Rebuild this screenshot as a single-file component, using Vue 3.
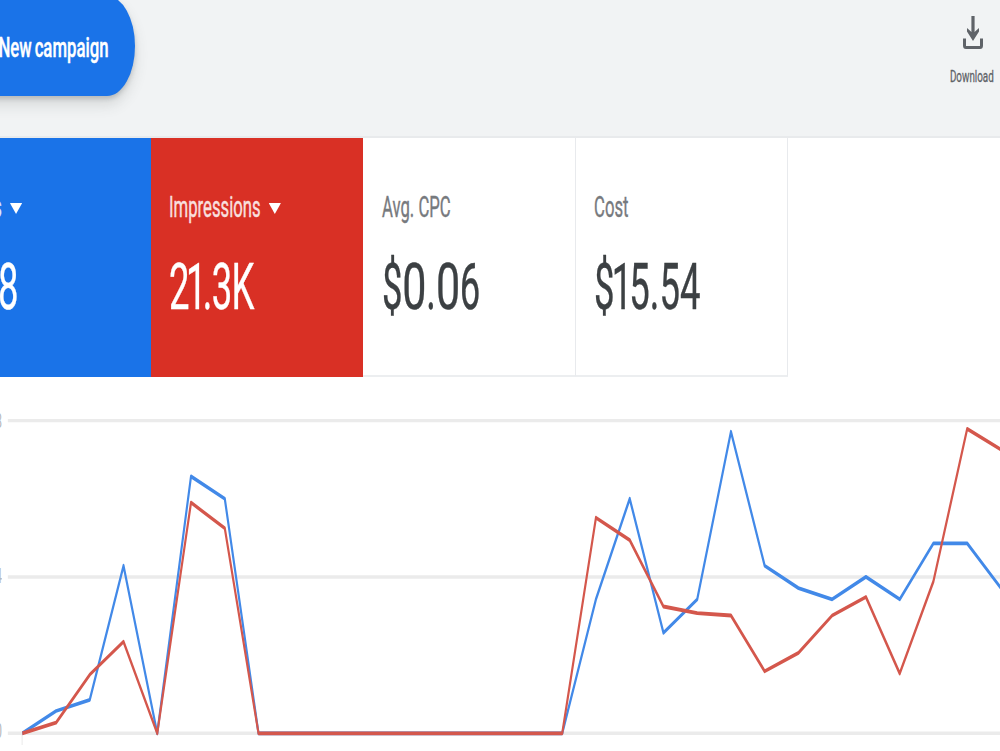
<template>
  <div class="page">
    <header class="toolbar">
      <button class="campaign-btn">
        <span class="campaign-text">New campaign</span>
      </button>
      <button class="download-btn">
        <svg class="download-icon" viewBox="0 0 20 34" fill="none" stroke="#5f6368">
          <path d="M10 0v18" stroke-width="3.2" />
          <path d="M4 12l4.5 4h3L16 12v3.500L10 25 4 15.500z" fill="#5f6368" stroke="none" />
          <path d="M1.500 22.500v7q0 2 1.500 2h14q1.500 0 1.500-2v-7" stroke-width="3" />
        </svg>
        <span class="download-text">Download</span>
      </button>
    </header>

    <section class="cards">
      <div v-for="card in cards" :key="card.label" class="card" :class="card.color">
        <div class="card-label">
          <span>{{ card.label }}</span>
          <svg v-if="card.menu" class="arrow" viewBox="0 0 22 11" preserveAspectRatio="none">
            <path d="M0 0h22L11 11z" fill="#fff" />
          </svg>
        </div>
        <div class="card-value">
          <span v-for="(ch, i) in card.value" :key="i" :class="{ one: ch === '1', zero: ch === '0' }">{{ ch }}</span>
        </div>
      </div>
    </section>

    <section class="chart">
      <div class="axis">
        <span v-for="n in axis" :key="n">{{ n }}</span>
      </div>
      <svg class="plot" viewBox="0 0 1785.7 374" preserveAspectRatio="none">
        <g stroke="#ebebeb" stroke-width="3.4">
          <path d="M14 43.6H1786M14 200H1786M14 356.3H1786" />
          <path d="M39.5 356v12" stroke-width="1.8" />
        </g>
        <polyline v-for="line in lines" :key="line.color" :points="toPoints(line.data)" :stroke="line.color" />
      </svg>
    </section>
  </div>
</template>

<script setup>
const cards = [
  { label: 'Clicks', value: '258', color: 'blue', menu: true },
  { label: 'Impressions', value: '21.3K', color: 'red', menu: true },
  { label: 'Avg. CPC', value: '$0.06', color: 'plain' },
  { label: 'Cost', value: '$15.54', color: 'plain' }
]

const axis = [28, 14, 0]

const lines = [
  {
    color: '#4289e8',
    data: [0, 2, 3, 15, 0, 23, 21, 0, 0, 0, 0, 0, 0, 0, 0, 0, 0, 12, 21, 9, 12, 27, 15, 13, 12, 14, 12, 17, 17, 13]
  },
  {
    color: '#d4574c',
    data: [0, 0.95, 5.25, 8.2, 0, 20.65, 18.35, 0, 0, 0, 0, 0, 0, 0, 0, 0, 0, 19.3, 17.3, 11.35, 10.75, 10.55, 5.55, 7.2, 10.55, 12.2, 5.35, 13.6, 27.25, 25.4]
  }
]

function toPoints(data) {
  return data.map((v, i) => `${(39.8 + i * 60.26).toFixed(1)},${(356.3 - v * 11.17).toFixed(1)}`).join(' ')
}
</script>

<style>
body {
  margin: 0;
  overflow: hidden;
}
</style>

<style scoped>
.page {
  width: 1000px;
  height: 751px;
  overflow: hidden;
  background: #fff;
  font-family: Roboto, "Liberation Sans", sans-serif;
}

.toolbar {
  height: 138px;
  box-sizing: border-box;
  display: flex;
  justify-content: space-between;
  align-items: flex-start;
  background: #f1f3f4;
  border-bottom: 2px solid #e8eaec;
}

button {
  padding: 0;
  border: none;
  background: none;
  font-family: inherit;
}

.campaign-btn {
  width: 215px;
  height: 100px;
  margin: -4px 0 0 -80px;
  padding: 4px 27px 0 0;
  display: flex;
  align-items: center;
  justify-content: flex-end;
  border-radius: 28px / 50px;
  background: #1a73e8;
  box-shadow: 0 3px 4px rgba(60, 64, 67, 0.2), 0 9px 14px rgba(60, 64, 67, 0.15);
}

.campaign-text {
  color: #fff;
  font-size: 27px;
  font-weight: 500;
  white-space: nowrap;
  word-spacing: -2px;
  transform: scaleX(0.62);
  transform-origin: right center;
  -webkit-text-stroke: 0.4px currentColor;
}

.download-btn {
  width: 55px;
  padding-top: 16px;
  display: flex;
  flex-direction: column;
  align-items: center;
}

.download-icon {
  width: 20px;
  height: 34px;
}

.download-text {
  margin: 16px 1px 0 0;
  color: #5f6368;
  font-size: 17px;
  line-height: 20px;
  transform: scaleX(0.58);
  -webkit-text-stroke: 0.3px currentColor;
}

.cards {
  display: flex;
  margin-left: -61.5px;
}

.card {
  width: 212.4px;
  height: 239px;
  box-sizing: border-box;
  padding: 49px 0 0 18.5px;
}

.blue {
  background: #1a73e8;
  color: #fff;
}

.red {
  background: #d93025;
  color: #fff;
}

.plain {
  color: #3c4043;
  border-right: 1px solid #e8eaed;
  border-bottom: 2px solid #eceef0;
}

.card-label {
  display: flex;
  align-items: center;
  width: 300px;
  height: 38px;
  font-size: 30px;
  transform: scaleX(0.557);
  transform-origin: left center;
}

.card-label span {
  opacity: 0.85;
  -webkit-text-stroke: 0.4px currentColor;
}

.plain .card-label {
  color: #5f6368;
}

.arrow {
  flex: none;
  width: 22px;
  height: 11px;
  margin: 4px 0 0 14px;
}

.card-value {
  margin-top: 23px;
  height: 78px;
  font-size: 64.5px;
  line-height: 78px;
  white-space: nowrap;
  transform: scaleX(0.565);
  transform-origin: left center;
  -webkit-text-stroke: 0.4px currentColor;
}

.red .card-value {
  letter-spacing: -1.3px;
}

.one {
  margin: 0 -5px;
}

.zero {
  display: inline-block;
  margin: 0 3px;
  transform: scaleX(1.18);
}

.chart {
  display: flex;
  height: 374px;
}

.axis {
  width: 40px;
  height: 340px;
  margin: 29px 0 0 -38.500px;
  display: flex;
  flex-direction: column;
  justify-content: space-between;
  color: #b4b8bc;
  font-size: 20px;
  line-height: 30px;
  text-align: right;
}

.axis span {
  transform: scaleX(0.6);
  transform-origin: right center;
}

.plot {
  flex: none;
  width: 1000px;
  height: 374px;
  margin-left: -1.500px;
}

.plot polyline {
  fill: none;
  stroke-width: 3.8;
  stroke-linejoin: round;
}
</style>
